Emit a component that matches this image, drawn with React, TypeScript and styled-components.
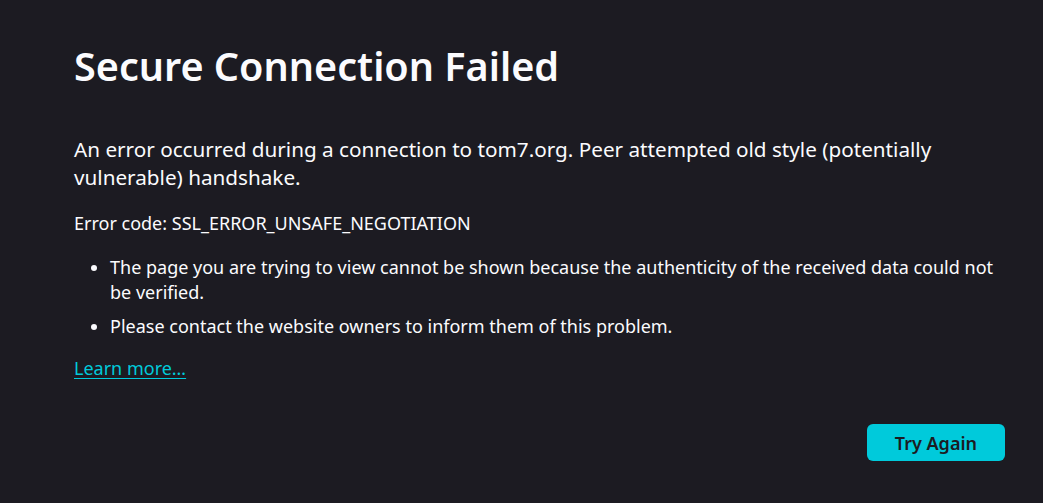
import styled, { createGlobalStyle } from 'styled-components';

const GlobalStyle = createGlobalStyle`
  html, body {
    margin: 0;
    padding: 0;
    background: #1c1b22;
  }
  body {
    font-family: 'Noto Sans', 'Open Sans', sans-serif;
    color: #fbfbfe;
  }
`;

const Page = styled.main`
  min-height: 503px;
  box-sizing: border-box;
  padding: 42px 0 0 74px;
`;
const Container = styled.div`
  width: 931px;
  display: flex;
  flex-direction: column;
`;
const Title = styled.h1`
  margin: 0;
  font-size: 39.6px;
  line-height: 48px;
  font-weight: 600;
`;
const Intro = styled.p`
  margin: 45px 0 0;
  font-size: 20.7px;
  line-height: 28px;
`;
const Text = styled.p`
  margin: 20px 0 0;
  font-size: 18px;
  line-height: 25px;
`;
const List = styled.ul`
  margin: 19px 0 0;
  padding-left: 36px;
  font-size: 18px;
  line-height: 25px;
  li + li {
    margin-top: 9px;
  }
`;
const Link = styled.a`
  margin-top: 17px;
  align-self: flex-start;
  font-size: 18px;
  line-height: 25px;
  color: #00cadb;
  text-decoration: underline;
  text-underline-offset: 3px;
`;
const Actions = styled.div`
  margin-top: 43px;
  display: flex;
  justify-content: flex-end;
`;
const Button = styled.button`
  height: 37px;
  padding: 0 28px;
  border: none;
  border-radius: 6px;
  background: #00cadb;
  color: #1c1b22;
  font-family: inherit;
  font-size: 18px;
  font-weight: 600;
  cursor: pointer;
`;

export default function App() {
  return (
    <>
      <GlobalStyle />
      <Page>
        <Container>
          <Title>Secure Connection Failed</Title>
          <Intro>
            An error occurred during a connection to tom7.org. Peer attempted old style (potentially
            vulnerable) handshake.
          </Intro>
          <Text>Error code: SSL_ERROR_UNSAFE_NEGOTIATION</Text>
          <List>
            <li>
              The page you are trying to view cannot be shown because the authenticity of the
              received data could not be verified.
            </li>
            <li>Please contact the website owners to inform them of this problem.</li>
          </List>
          <Link href="#">Learn more…</Link>
          <Actions>
            <Button>Try Again</Button>
          </Actions>
        </Container>
      </Page>
    </>
  );
}
